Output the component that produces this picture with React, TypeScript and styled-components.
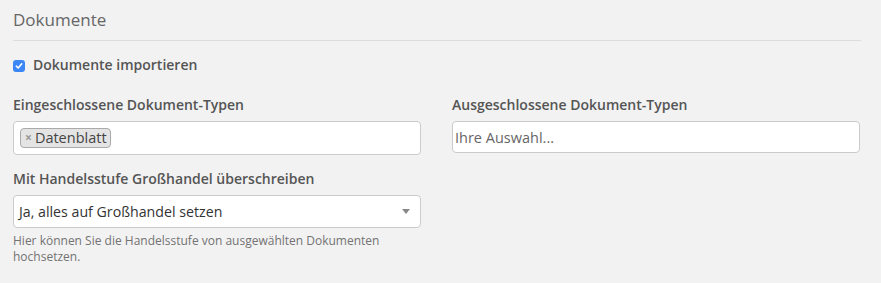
import React from 'react';
import styled, { createGlobalStyle } from 'styled-components';

const GlobalStyle = createGlobalStyle`
  html, body {
    margin: 0;
    padding: 0;
    background: #f2f2f2;
  }
  body {
    font-family: 'Open Sans', 'DejaVu Sans', sans-serif;
    color: #555;
  }
`;

const Fieldset = styled.section`
  padding: 0 20px 20px 13px;
`;

const Legend = styled.div`
  padding: 7px 0 8px;
  font-size: 17px;
  line-height: 25px;
  color: #666;
  border-bottom: 1px solid #dcdcdc;
`;

const CheckRow = styled.label`
  display: flex;
  align-items: center;
  gap: 8px;
  margin-top: 14px;
  font-size: 14px;
  line-height: 20px;
  font-weight: 600;
  color: #555;
`;

const CheckBox = styled.span`
  display: inline-flex;
  align-items: center;
  justify-content: center;
  width: 12px;
  height: 12px;
  border-radius: 3px;
  background: #3b87f5;
  margin-top: 1px;
`;

const Row = styled.div<{ $top: number }>`
  display: grid;
  grid-template-columns: 408px 408px;
  column-gap: 31px;
  margin-top: ${(p) => p.$top}px;
`;

const Group = styled.div`
  display: flex;
  flex-direction: column;
`;

const Label = styled.div`
  font-size: 14px;
  line-height: 20px;
  font-weight: 600;
  color: #555;
  margin-bottom: 6px;
`;

const Box = styled.div<{ $h: number }>`
  box-sizing: border-box;
  height: ${(p) => p.$h}px;
  background: #fff;
  border: 1px solid #cbcbcb;
  border-radius: 4px;
  display: flex;
  align-items: center;
  font-size: 14.5px;
  color: #444;
`;

const MultiBox = styled(Box)`
  padding: 0 6px;
`;

const Tag = styled.span`
  display: inline-flex;
  align-items: center;
  gap: 2px;
  height: 20px;
  box-sizing: border-box;
  padding: 0 3px 0 4px;
  background: #e4e4e4;
  border: 1px solid #aaa;
  border-radius: 4px;
  font-size: 14.5px;
  line-height: 18px;
  color: #444;
`;

const TagRemove = styled.span`
  font-size: 12px;
  font-weight: 700;
  color: #999;
  margin-right: 1px;
`;

const Placeholder = styled.span`
  padding-left: 2px;
  color: #666;
`;

const SelectBox = styled(Box)`
  justify-content: space-between;
  padding: 0 10px 0 5px;
  font-size: 14.2px;
  color: #333;
`;

const Caret = styled.span`
  width: 0;
  height: 0;
  border-left: 4px solid transparent;
  border-right: 4px solid transparent;
  border-top: 5px solid #888;
`;

const Help = styled.div`
  margin-top: 5px;
  font-size: 12px;
  line-height: 15.5px;
  color: #737373;
`;

export default function App() {
  return (
    <>
      <GlobalStyle />
      <Fieldset>
        <Legend>Dokumente</Legend>
        <CheckRow>
          <CheckBox>
            <svg width="8" height="8" viewBox="0 0 8 8">
              <path d="M1.3 4.2 L3.2 6 L6.7 1.8" fill="none" stroke="#fff" strokeWidth="1.6" strokeLinecap="round" strokeLinejoin="round" />
            </svg>
          </CheckBox>
          Dokumente importieren
        </CheckRow>
        <Row $top={20}>
          <Group>
            <Label>Eingeschlossene Dokument-Typen</Label>
            <MultiBox $h={34}>
              <Tag>
                <TagRemove>×</TagRemove>Datenblatt
              </Tag>
            </MultiBox>
          </Group>
          <Group>
            <Label>Ausgeschlossene Dokument-Typen</Label>
            <Box $h={32}>
              <Placeholder>Ihre Auswahl...</Placeholder>
            </Box>
          </Group>
        </Row>
        <Row $top={14}>
          <Group>
            <Label>Mit Handelsstufe Großhandel überschreiben</Label>
            <SelectBox $h={33}>
              <span>Ja, alles auf Großhandel setzen</span>
              <Caret />
            </SelectBox>
            <Help>
              Hier können Sie die Handelsstufe von ausgewählten Dokumenten
              <br />
              hochsetzen.
            </Help>
          </Group>
        </Row>
      </Fieldset>
    </>
  );
}
